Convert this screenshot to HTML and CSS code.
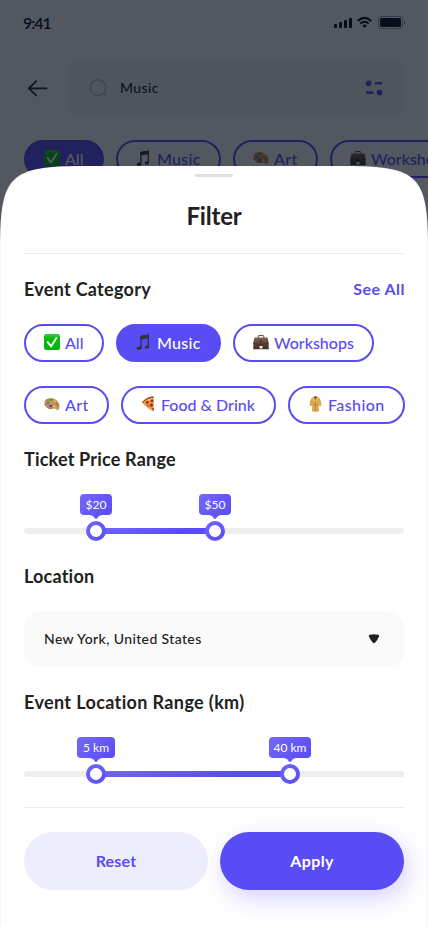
FILE: index.html
```html
<!DOCTYPE html>
<html lang="en">
<head>
<meta charset="utf-8">
<title>Filter</title>
<link rel="stylesheet" href="styles.css">
</head>
<body>
<svg class="defs" width="0" height="0" aria-hidden="true">
  <defs>
    <linearGradient id="leather" x1="0" y1="0" x2="0" y2="1"><stop offset="0" stop-color="#7d6150"/><stop offset="1" stop-color="#3c2a22"/></linearGradient>
    <linearGradient id="green" x1="0" y1="0" x2="0" y2="1"><stop offset="0" stop-color="#35d043"/><stop offset=".25" stop-color="#04bd0d"/><stop offset="1" stop-color="#03b30b"/></linearGradient>
    <symbol id="check" viewBox="0 0 16 16"><rect width="16" height="16" rx="2.5" fill="url(#green)"/><path d="M3.7 8.1 7 12.4 12.4 3.9" fill="none" stroke="#fff" stroke-width="1.9" stroke-linecap="round" stroke-linejoin="round"/></symbol>
    <symbol id="note" viewBox="0 0 16 16"><path d="M4.300 2.100 12.900.6v12h-1.200V4.300L5.500 5.400v8.500H4.300z" fill="#2b2b33"/><path d="M4.300 2.100 12.900.6v3.100L4.300 5.200z" fill="#34343b"/><ellipse cx="3" cy="14.200" rx="2.300" ry="1.600" fill="#2b2b33"/><ellipse cx="10.900" cy="12.900" rx="2.200" ry="1.600" fill="#2b2b33"/><path d="M1.700 13.900q1-1.100 2.200-.8M9.400 12.600q.8-.9 2-.7" stroke="#77777e" stroke-width=".6" fill="none"/></symbol>
    <symbol id="case" viewBox="0 0 16 16"><path d="M5.200 3.700V2.500q0-.9.900-.9h3.800q.9 0 .9.900v1.200" fill="none" stroke="#49362e" stroke-width="1"/><path d="M1.400 3.500h13.200l1.100 5.500v6.300H.3V9z" fill="url(#leather)"/><path d="M.3 9.100 5 10.200h6l4.700-1.100" stroke="#2c1f1a" stroke-width=".5" fill="none"/><rect x="7.300" y="6" width="1.400" height="5.300" fill="#4b372e"/><rect x="6.500" y="12" width="3" height="2.600" rx=".4" fill="#eee"/></symbol>
    <symbol id="palette" viewBox="0 0 16 16"><path d="M.5 6.300C.7 3.300 4 1.900 7.700 2.300c4.300.5 7.400 3.500 7.800 7.400.2 2.100-.6 4.300-2 4.500-1.600.1-1.500-1.700-3-1.600-1.300.2-2.200.8-4.300.1C3 11.600.3 9.700.5 6.300z" fill="#c8914e"/><path d="M.7 8c.9 2.800 3.500 4.500 6.200 4.800" fill="none" stroke="#85572c" stroke-width=".8"/><ellipse cx="3.500" cy="4.700" rx="1.200" ry=".9" fill="#789d4f"/><ellipse cx="7" cy="3.800" rx="1.700" ry="1" fill="#15b82b"/><ellipse cx="3.900" cy="7.300" rx="1.300" ry="1" fill="#674cf0"/><ellipse cx="6.700" cy="10" rx="1.600" ry="1.100" fill="#4935ce"/><ellipse cx="10.800" cy="5.200" rx="1.400" ry=".9" fill="#e4b66a"/><ellipse cx="13" cy="8.200" rx="1.200" ry="1" fill="#a86d38"/><path d="m9.500 9 4 4.500" stroke="#c3bfb5" stroke-width=".7"/><ellipse cx="10.200" cy="10.600" rx=".7" ry=".5" fill="#fff"/></symbol>
    <symbol id="pizza" viewBox="0 0 16 16"><path d="M.7 6.600 12.800 1.700v14Q8 13.800.7 6.600z" fill="#e3a14e"/><path d="M1.200 6C4.700 2.300 8 .7 12 .3q1 .1.900 1.500C8 2.400 5 4 2 7z" fill="#9e4b20"/><path d="M2.500 6.600Q6 3.300 12 2.800" stroke="#efbd69" stroke-width=".8" fill="none"/><g fill="#b92b19"><circle cx="6.300" cy="6.300" r="1.500"/><circle cx="11" cy="4.900" r="1.400"/><circle cx="10.300" cy="9.300" r="1.700"/><circle cx="12" cy="13" r="1"/><circle cx="6.700" cy="9.500" r=".8"/></g></symbol>
    <symbol id="coat" viewBox="0 0 16 16"><path d="M4.300 1.600 6 .4h3l1.700 1.200q2.400 1.400 2.900 7.800l-2.200.8L10.600 8l.5 7.300q-3.600 1-7.200 0L4.400 8l-.8 2.200-2.200-.8Q1.900 3 4.300 1.600z" fill="#dda94f"/><path d="M7.500 4.500V15M4.500 9h6" fill="none" stroke="#ad752c" stroke-width=".6"/><path d="m4.900 1.700 1 3 1.600.500 1.600-.500 1-3" fill="none" stroke="#f0c670" stroke-width=".7"/><path d="M6 .5h3L7.500 3.600z" fill="#633b1d"/></symbol>
  </defs>
</svg>
<main class="screen">
  <div class="status">
    <span class="time">9:41</span>
    <svg class="signals" width="73" height="16" viewBox="0 0 73 16">
      <g fill="#09101d"><rect x="1" y="10" width="3" height="4" rx=".8"/><rect x="6" y="8" width="3" height="6" rx=".8"/><rect x="11" y="6" width="3" height="8" rx=".8"/><rect x="16" y="4" width="3" height="10" rx=".8"/></g>
      <g fill="none" stroke="#09101d" stroke-width="2"><path d="M24.700 7Q31.500.8 38.300 7"/><path d="M27.200 9.600q4.300-3.800 8.600 0"/></g><path d="M29.300 11.500q2.200-1.800 4.400 0l-2.200 2.400z" fill="#09101d"/>
      <rect x="45.500" y="2.500" width="24" height="12" rx="2.500" fill="none" stroke="#09101d" stroke-opacity=".38"/><rect x="47" y="4" width="21" height="9" rx="1.500" fill="#09101d"/><path d="M71 6.500q2.200 2 0 4z" fill="#09101d" fill-opacity=".5"/>
    </svg>
  </div>
  <div class="topbar">
    <svg width="28" height="28" viewBox="0 0 28 28"><path d="M22.500 14.300H4.700m7.500-7.200-7.500 7.200 7.500 7" fill="none" stroke="#212121" stroke-width="1.700" stroke-linecap="round" stroke-linejoin="round"/></svg>
    <div class="search">
      <svg width="20" height="20" viewBox="0 0 20 20"><g fill="none" stroke="#bdbdbd" stroke-width="1.500" stroke-linecap="round"><circle cx="9" cy="9.700" r="7.900"/><path d="m15 16 2 1.900"/></g></svg>
      <span class="query">Music</span>
      <svg class="tune" width="20" height="20" viewBox="0 0 20 20"><g fill="#584cf4"><circle cx="4.600" cy="5.300" r="2.900"/><circle cx="15.500" cy="14.600" r="2.900"/></g><path d="M11.800 5.300h5.300M3 14.600h5.300" stroke="#584cf4" stroke-width="2.600" stroke-linecap="round"/></svg>
    </div>
  </div>
  <div class="row back-row">
    <span class="chip all on"><svg><use href="#check"/></svg><b>All</b></span>
    <span class="chip music"><svg><use href="#note"/></svg><b>Music</b></span>
    <span class="chip art"><svg><use href="#palette"/></svg><b>Art</b></span>
    <span class="chip work"><svg><use href="#case"/></svg><b>Workshops</b></span>
  </div>
  <div class="scrim"></div>
  <section class="sheet">
    <svg class="sheet-top" width="428" height="81" viewBox="0 0 428 81"><path d="M0 81C0 10 10 0 82 0H346c72 0 82 10 82 81z" fill="#f5f5f5"/><path d="M1 81C1 11 11 1 82 .5H346c71 .5 81 10.500 81 80.500z" fill="#fff"/></svg>
    <div class="content">
      <div class="handle"></div>
      <h1>Filter</h1>
      <div class="heading"><h2 class="h-cat">Event Category</h2><a class="see">See All</a></div>
      <div class="row r1">
        <span class="chip all"><svg><use href="#check"/></svg><b>All</b></span>
        <span class="chip music on"><svg><use href="#note"/></svg><b>Music</b></span>
        <span class="chip work"><svg><use href="#case"/></svg><b>Workshops</b></span>
      </div>
      <div class="row r2">
        <span class="chip art"><svg><use href="#palette"/></svg><b>Art</b></span>
        <span class="chip food"><svg><use href="#pizza"/></svg><b>Food &amp; Drink</b></span>
        <span class="chip fashion"><svg><use href="#coat"/></svg><b>Fashion</b></span>
      </div>
      <h2 class="h-price">Ticket Price Range</h2>
      <div class="slider price">
        <div class="fill"></div>
        <div class="knob lo"><span class="tip">$20</span></div>
        <div class="knob hi"><span class="tip">$50</span></div>
      </div>
      <h2 class="h-loc">Location</h2>
      <div class="select"><span>New York, United States</span><svg width="12" height="10" viewBox="0 0 12 10"><path d="M2 .8Q6-.1 10 .8q1.700.3.900 1.900Q9.500 6.300 7 8.700q-1 .9-2 0Q2.500 6.300 1.100 2.700.3 1.100 2 .8z" fill="#212121"/></svg></div>
      <h2 class="h-range">Event Location Range (km)</h2>
      <div class="slider distance">
        <div class="fill"></div>
        <div class="knob lo"><span class="tip">5 km</span></div>
        <div class="knob hi"><span class="tip">40 km</span></div>
      </div>
      <div class="actions"><button class="reset"><span>Reset</span></button><button class="apply"><span>Apply</span></button></div>
    </div>
  </section>
</main>
</body>
</html>
```
FILE: styles.css
```css
* { box-sizing: border-box; margin: 0; }
body { font-family: Lato, "Open Sans", sans-serif; font-variant-ligatures: none; color: #212121; background: #fff; }
.defs { position: absolute; }
.screen { position: relative; width: 428px; height: 926px; overflow: hidden; background: #fff; }
.status { height: 44px; padding: 14px 22px 0 23px; display: flex; justify-content: space-between; }
.time { font-size: 16px; line-height: 17px; font-weight: 600; color: #09101d; letter-spacing: -1px; }
.signals { width: 73px; }
.topbar { display: flex; align-items: center; gap: 16px; padding: 16px 24px 24px; }
.search { flex: 1; height: 56px; border-radius: 16px; background: #f5f5f5; display: flex; align-items: center; padding: 0 20px 0 21px; }
.query { font-size: 14px; line-height: 18px; font-weight: 500; letter-spacing: .4px; margin: -1px 0 0 11px; }
.tune { margin-left: auto; }
.row { display: flex; gap: 12px; }
.back-row { padding-left: 24px; }
.chip { flex: none; height: 38px; border: 2px solid #584cf4; border-radius: 19px; padding-left: 18px; display: flex; align-items: center; gap: 5px; color: #584cf4; font-size: 16px; white-space: nowrap; }
.chip svg { width: 16px; height: 16px; flex: none; margin-top: -2px; }
.chip b { font-weight: 500; line-height: 22px; }
.chip.on { background: #584cf4; color: #fff; }
.all { width: 80px; }
.music { width: 105px; letter-spacing: .3px; }
.work { width: 141px; }
.art { width: 85px; letter-spacing: .4px; }
.food { width: 155px; }
.food b { margin-left: -1px; }
.fashion { width: 117px; letter-spacing: .4px; }
.fashion b { margin-left: -1px; }
.scrim { position: absolute; inset: 0; background: rgba(9, 16, 29, .7); }
.sheet { position: absolute; left: 0; top: 166px; width: 428px; height: 760px; }
.sheet-top { display: block; }
.sheet::after { content: ""; display: block; height: 679px; background: #fff; border: 1px solid #f5f5f5; border-top: 0; }
.content { position: absolute; inset: 0; z-index: 1; padding: 8px 24px 0; }
.handle { width: 38px; height: 3px; border-radius: 2px; background: #e0e0e0; margin: 0 auto; }
h1 { font-size: 24px; line-height: 29px; font-weight: 700; text-align: center; height: 77px; padding-top: 24px; border-bottom: 1px solid #eee; letter-spacing: -.2px; }
.heading { display: flex; justify-content: space-between; align-items: center; margin-top: 24px; }
h2 { font-size: 18px; line-height: 22px; font-weight: 700; white-space: nowrap; letter-spacing: .2px; }
.h-cat { letter-spacing: .28px; }
.h-range { letter-spacing: .37px; }
.h-loc { letter-spacing: .2px; }
.see { font-size: 16px; line-height: 22px; font-weight: 700; color: #584cf4; letter-spacing: .5px; margin-right: -1px; }
.r1 { margin-top: 24px; }
.r2 { margin-top: 24px; }
.h-price { margin-top: 24px; }
.slider { position: relative; height: 6px; border-radius: 3px; background: #eee; }
.price { margin-top: 58px; }
.distance { margin-top: 58px; }
.fill { height: 6px; background: linear-gradient(170deg, #7468fa, #584cf4 70%); }
.price .fill { margin-left: 72px; width: 119px; }
.distance .fill { margin-left: 72px; width: 194px; }
.knob { position: absolute; top: -7px; width: 20px; height: 20px; border-radius: 50%; background: radial-gradient(circle, #fff 5.500px, transparent 6.300px), linear-gradient(135deg, #7468fa, #584cf4); display: flex; justify-content: center; }
.lo { left: 62px; }
.price .hi { left: 181px; }
.distance .hi { left: 256px; }
.tip { position: absolute; bottom: 26px; width: 32px; height: 21px; border-radius: 4px; background: linear-gradient(135deg, #7468fa, #584cf4); color: #fff; font-size: 12px; line-height: 22px; text-align: center; white-space: nowrap; }
.tip::after { content: ""; position: absolute; left: calc(50% - 6px); top: 21px; width: 12px; height: 4px; background: #6256f6; clip-path: polygon(0 0, 100% 0, 75% 25%, 58% 85%, 50% 100%, 42% 85%, 25% 25%); }
.distance .tip { width: 38px; }
.distance .hi .tip { width: 42px; }
.h-loc { margin-top: 31px; }
.select { margin-top: 24px; height: 56px; border-radius: 16px; background: #fafafa; display: flex; justify-content: space-between; align-items: center; padding: 0 24px 0 20px; font-size: 14px; line-height: 18px; font-weight: 500; letter-spacing: .38px; }
.h-range { margin-top: 24px; }
.actions { margin-top: 30px; border-top: 1px solid #eee; padding-top: 24px; display: flex; gap: 12px; }
button { flex: 1; height: 58px; padding: 0 0 2px; border: 0; border-radius: 29px; font: 700 16px Lato, sans-serif; letter-spacing: .2px; }
.reset { background: #eeedfe; color: #584cf4; }
.apply { background: #584cf4; color: #fff; box-shadow: 4px 8px 24px rgba(88, 76, 244, .25); letter-spacing: .4px; }
```
